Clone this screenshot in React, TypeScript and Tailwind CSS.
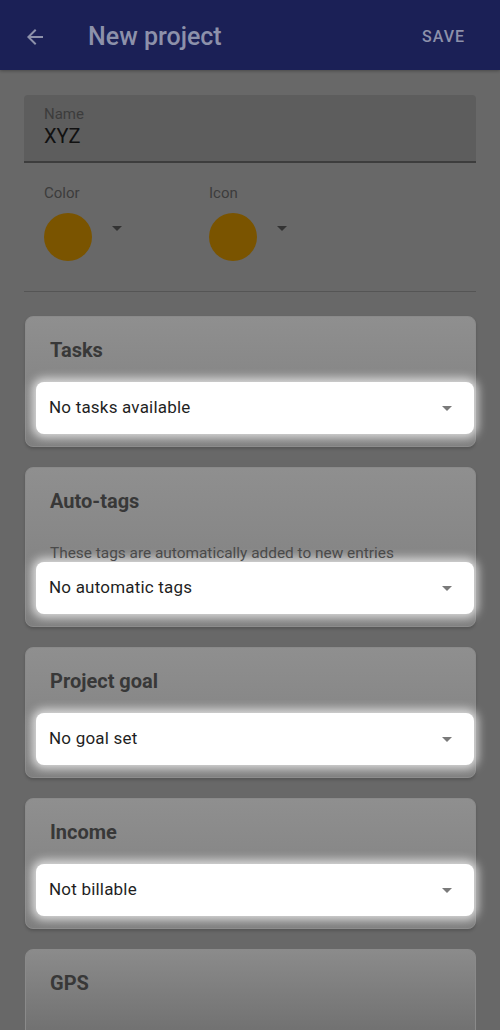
import { ReactNode } from "react";

function Caret({ className }: { className: string }) {
  return (
    <svg width="10" height="5" viewBox="0 0 10 5" className={className}>
      <path d="M0 0h10L5 5z" fill="currentColor" />
    </svg>
  );
}

function Dropdown({ label }: { label: string }) {
  return (
    <div className="ml-[10px] mr-[1px] flex h-[52px] items-center justify-between rounded-lg bg-white pl-[13px] pr-[22px] shadow-[0_0_10px_4px_rgba(255,255,255,0.7)]">
      <span className="text-[17px] tracking-[0.2px] text-[#1f1f1f]">{label}</span>
      <Caret className="text-[#7a7a7a]" />
    </div>
  );
}

function Card({ title, children, last }: { title: string; children?: ReactNode; last?: boolean }) {
  return (
    <section
      className={
        last
          ? "h-[100px] rounded-t-lg border border-[#8a8a8a] bg-gradient-to-b from-[#8b8b8b] to-[#6c6c6c]"
          : "rounded-lg border border-[#8a8a8a] bg-gradient-to-b from-[#8f8f8f] to-[#7e7e7e] pb-[12px] shadow-[0_2px_3px_rgba(0,0,0,0.18)]"
      }
    >
      <h2 className="px-6 pt-[21px] text-[20px] font-bold leading-[24px] text-[#383838]">{title}</h2>
      {children}
    </section>
  );
}

export default function App() {
  return (
    <div className="h-[1030px] w-[500px] overflow-hidden bg-[#686868] font-['Roboto',sans-serif]">
      <header className="flex h-[70px] items-center bg-[#1b2056] pl-[23px] pr-[35px] pt-[3px] shadow-[0_1px_3px_rgba(0,0,0,0.3)]">
        <svg width="24" height="24" viewBox="0 0 24 24" className="text-[#8d91aa]">
          <path d="M20 11H7.83l5.59-5.59L12 4l-8 8 8 8 1.41-1.41L7.83 13H20v-2z" fill="currentColor" />
        </svg>
        <h1 className="ml-[41px] flex-1 text-[25px] font-medium text-[#8d91aa]">New project</h1>
        <span className="text-[16px] font-medium tracking-[1px] text-[#8d91aa]">SAVE</span>
      </header>

      <main className="px-6 pt-[25px]">
        <div className="h-[68px] rounded-t border-b-2 border-[#3d3d3d] bg-[#5d5d5d] px-5 pt-[10px]">
          <div className="text-[15px] leading-[18px] text-[#3c3c3c]">Name</div>
          <div className="text-[20px] leading-[26px] text-[#111]">XYZ</div>
        </div>

        <div className="flex gap-[87px] px-5 pt-[21px]">
          <div>
            <div className="text-[15px] leading-[18px] text-[#3c3c3c]">Color</div>
            <div className="mt-[11px] flex items-start gap-[20px]">
              <div className="h-[48px] w-[48px] rounded-full bg-[#7a5400]" />
              <Caret className="mt-[13px] text-[#333]" />
            </div>
          </div>
          <div>
            <div className="text-[15px] leading-[18px] text-[#3c3c3c]">Icon</div>
            <div className="mt-[11px] flex items-start gap-[20px]">
              <div className="h-[48px] w-[48px] rounded-full bg-[#7a5400]" />
              <Caret className="mt-[13px] text-[#333]" />
            </div>
          </div>
        </div>

        <div className="mt-[30px] h-px bg-[#555]" />

        <div className="mt-[24px] flex flex-col gap-[20px] pl-px">
          <Card title="Tasks">
            <div className="mt-[20px]">
              <Dropdown label="No tasks available" />
            </div>
          </Card>
          <Card title="Auto-tags">
            <p className="mt-[30px] px-6 text-[15.4px] leading-[20px] text-[#4a4a4a]">
              These tags are automatically added to new entries
            </p>
            <div className="-mt-[1px]">
              <Dropdown label="No automatic tags" />
            </div>
          </Card>
          <Card title="Project goal">
            <div className="mt-[20px]">
              <Dropdown label="No goal set" />
            </div>
          </Card>
          <Card title="Income">
            <div className="mt-[20px]">
              <Dropdown label="Not billable" />
            </div>
          </Card>
          <Card title="GPS" last />
        </div>
      </main>
    </div>
  );
}
